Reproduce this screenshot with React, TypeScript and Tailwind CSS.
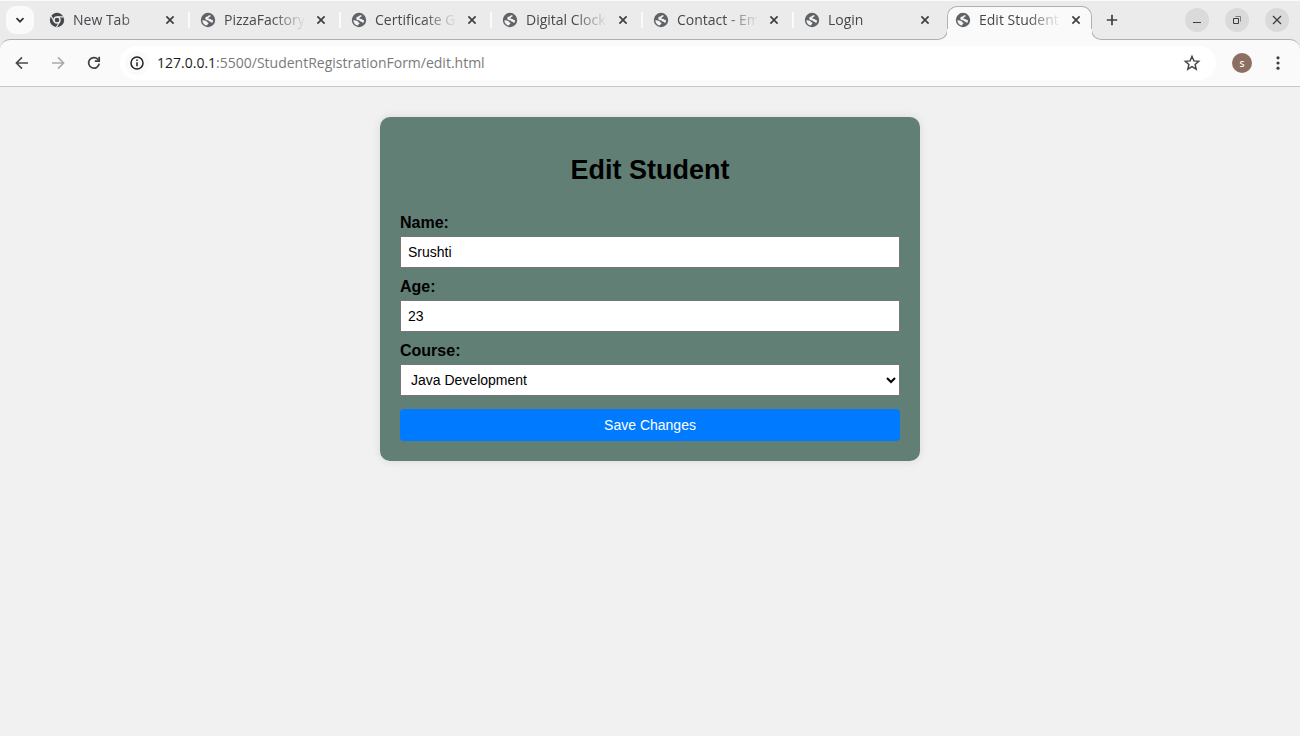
import { useState, type ReactNode } from "react";

const tabs = [
  { title: "New Tab", icon: "chrome" },
  { title: "PizzaFactory", icon: "globe" },
  { title: "Certificate G", icon: "globe" },
  { title: "Digital Clock", icon: "globe" },
  { title: "Contact - Em", icon: "globe" },
  { title: "Login", icon: "globe" },
  { title: "Edit Student", icon: "globe", active: true },
];

function GlobeIcon() {
  return (
    <svg viewBox="0 0 16 16" className="size-4 shrink-0" aria-hidden="true">
      <circle cx="8" cy="8" r="7.2" fill="#5f6368" />
      <path
        d="M8.8 3.4 C9.6 3 10.6 3.2 10.9 3.8 C10.9 4.7 9.8 4.7 9.2 5.2 C8.6 5.7 8.2 6 8.4 6.4 C8.9 6.8 10 6.5 10.6 7.1 C11.1 7.8 11.8 8.1 12.8 8 C13.2 9.2 12.8 10.2 12.1 10.9 C11.3 10.8 11.2 10 10.3 9.8 C9 9.5 8.8 8.6 7.9 8.3 C6.4 8 5.3 7.6 5.3 6.4 C5.3 5.1 6.3 5 7.2 4.6 C7.9 4.2 8 3.7 8.8 3.4 Z"
        fill="#f2f2f2"
      />
      <path
        d="M2.3 8.4 C3.7 8.3 5.2 8.4 6.2 9.1 C7.2 9.6 6.9 10.2 7.8 10.6 C8.8 11 8.6 11.8 7.8 12.2 C7.2 12.5 7.3 13.1 6.8 13.4 C4.3 13 2.4 10.8 2.3 8.4 Z"
        fill="#f2f2f2"
      />
    </svg>
  );
}

function ChromeIcon() {
  return (
    <svg viewBox="0 0 16 16" className="size-4 shrink-0" aria-hidden="true">
      <circle cx="8" cy="8" r="7.2" fill="#45484c" />
      <circle cx="8" cy="8" r="3.7" fill="#ebebeb" />
      <circle cx="8" cy="8" r="2.3" fill="#45484c" />
      <path d="M8 4.9H14.6M5.3 9.6L2 3.9M10.7 9.6L7.4 15.2" stroke="#ebebeb" strokeWidth="1.1" fill="none" />
    </svg>
  );
}

function CloseIcon() {
  return (
    <svg viewBox="0 0 16 16" className="size-4" fill="none" stroke="#3c4043" strokeWidth="1.7" aria-hidden="true">
      <path d="M4.4 4.4l7.2 7.2M11.6 4.4l-7.2 7.2" />
    </svg>
  );
}

function WindowButton({ label, children }: { label: string; children: ReactNode }) {
  return (
    <button aria-label={label} className="flex size-6 items-center justify-center rounded-full bg-[#dadada]">
      <svg viewBox="0 0 16 16" className="size-4" fill="none" stroke="#3d3d3d" aria-hidden="true">
        {children}
      </svg>
    </button>
  );
}

function TabStrip() {
  return (
    <div className="flex h-[39px] items-start border-t border-[#fafafa] pt-[5px] pr-[11px] font-['Open_Sans','Noto_Sans',sans-serif]">
      <button aria-label="Search tabs" className="ml-1.5 flex size-7 shrink-0 items-center justify-center rounded-[10px] bg-[#fafafa]">
        <svg viewBox="0 0 16 16" className="size-4" fill="none" stroke="#333" strokeWidth="1.7" aria-hidden="true">
          <path d="M4.5 6.2L8 9.7l3.5-3.5" />
        </svg>
      </button>
      <ul className="ml-[7px] flex min-w-0">
        {tabs.map((tab, i) => (
          <li key={tab.title} className="flex w-[151px] min-w-0 items-start">
            <div
              className={
                tab.active
                  ? "relative z-10 flex h-[34px] w-[145px] items-start rounded-t-[10px] border border-b-0 border-[#b0b0b0] bg-[#fafafa] px-[7px] pt-[5px]"
                  : "flex h-[34px] w-[145px] items-start px-2 pt-1.5"
              }
            >
              {tab.active && (
                <>
                  <span className="absolute bottom-0 -left-[11px] size-[11px] bg-[#fafafa]">
                    <span className="block size-[11px] rounded-br-[10px] border-r border-b border-[#b0b0b0] bg-[#ebebeb]" />
                  </span>
                  <span className="absolute -right-[11px] bottom-0 size-[11px] bg-[#fafafa]">
                    <span className="block size-[11px] rounded-bl-[10px] border-b border-l border-[#b0b0b0] bg-[#ebebeb]" />
                  </span>
                  <span className="absolute bottom-0 -left-px h-[11px] w-px bg-[#fafafa]" />
                  <span className="absolute -right-px bottom-0 h-[11px] w-px bg-[#fafafa]" />
                </>
              )}
              <a href="#" className="flex h-4 min-w-0 flex-1 items-center gap-2">
                {tab.icon === "chrome" ? <ChromeIcon /> : <GlobeIcon />}
                <span className="min-w-0 flex-1 overflow-hidden [mask-image:linear-gradient(to_right,black_48px,transparent_82px)] text-[14px] leading-5 whitespace-nowrap text-[#45484c]">
                  {tab.title}
                </span>
              </a>
              <button aria-label={"Close " + tab.title} className="ml-[9px] size-4 shrink-0">
                <CloseIcon />
              </button>
            </div>
            {i < tabs.length - 2 && <span className="mt-1.5 ml-0.5 h-4 w-0.5 bg-[#fafafa]" />}
          </li>
        ))}
      </ul>
      <button aria-label="New tab" className="mt-1.5 ml-1.5 size-4 shrink-0">
        <svg viewBox="0 0 16 16" className="size-4" fill="none" stroke="#3c4043" strokeWidth="1.7" aria-hidden="true">
          <path d="M8 2.8v10.4M2.8 8h10.4" />
        </svg>
      </button>
      <div className="mt-0.5 ml-auto flex shrink-0 gap-4">
        <WindowButton label="Minimize">
          <path d="M4 10.5h8" />
        </WindowButton>
        <WindowButton label="Restore">
          <path d="M4.5 6.5h5v5h-5z" />
          <path d="M6.5 4.5h5v5" strokeOpacity=".6" />
        </WindowButton>
        <WindowButton label="Close window">
          <path d="M4 4l8 8M12 4l-8 8" strokeWidth="1.3" />
        </WindowButton>
      </div>
    </div>
  );
}

function Toolbar() {
  return (
    <div className="flex h-12 items-center rounded-t-[10px] border-t border-b border-t-[#b0b0b0] border-b-[#c8c8c8] bg-[#fafafa] pr-3.5 pl-3 font-['Open_Sans','Noto_Sans',sans-serif]">
      <div className="flex gap-4">
        <button aria-label="Back">
          <svg viewBox="0 0 20 20" className="size-5" fill="none" stroke="#45484c" strokeWidth="1.6" aria-hidden="true">
            <path d="M16 10H4.8M10 4.4L4.4 10l5.6 5.6" />
          </svg>
        </button>
        <button aria-label="Forward" disabled>
          <svg viewBox="0 0 20 20" className="size-5" fill="none" stroke="#ababab" strokeWidth="1.6" aria-hidden="true">
            <path d="M4 10h11.2M10 4.4l5.6 5.6-5.6 5.6" />
          </svg>
        </button>
        <button aria-label="Reload">
          <svg viewBox="0 0 20 20" className="size-5" fill="none" stroke="#3c4043" strokeWidth="1.7" aria-hidden="true">
            <path d="M15.2 10.6A5.3 5.3 0 1 1 13.9 6.3L15 7.6" />
            <path d="M15.2 3.8v4.4h-4.4" />
          </svg>
        </button>
      </div>
      <div className="ml-4 flex h-[34px] min-w-0 flex-1 items-center rounded-full bg-white pr-3.5 pl-[5px]">
        <button aria-label="View site information" className="flex size-6 shrink-0 items-center justify-center rounded-full bg-[#fafafa]">
          <svg viewBox="0 0 16 16" className="size-4" fill="none" stroke="#202124" strokeWidth="1.5" aria-hidden="true">
            <circle cx="8" cy="8" r="6" />
            <path d="M8 7.2v4M8 4.5v1.5" />
          </svg>
        </button>
        <a href="#" className="ml-2 min-w-0 flex-1 truncate text-[14px] leading-5 text-[#7a7a7a]">
          <span className="text-[#1c1c1c]">127.0.0.1</span>:5500/StudentRegistrationForm/edit.html
        </a>
        <button aria-label="Bookmark this tab">
          <svg viewBox="0 0 20 20" className="size-5" fill="none" stroke="#45484c" strokeWidth="1.5" aria-hidden="true">
            <path d="M10 3.5l1.9 4.4 4.8.4-3.6 3.1 1.1 4.7-4.2-2.5-4.2 2.5 1.1-4.7-3.6-3.1 4.8-.4z" />
          </svg>
        </button>
      </div>
      <button aria-label="Profile" className="ml-4 flex size-5 items-center justify-center rounded-full bg-[#8d6e63] text-[9px] leading-none font-semibold text-white">
        S
      </button>
      <button aria-label="Menu" className="ml-[18px]">
        <svg viewBox="0 0 16 16" className="size-4" fill="#3c4043" aria-hidden="true">
          <circle cx="8" cy="2.8" r="1.6" />
          <circle cx="8" cy="8" r="1.6" />
          <circle cx="8" cy="13.2" r="1.6" />
        </svg>
      </button>
    </div>
  );
}

function EditForm() {
  const [name, setName] = useState("Srushti");
  const [age, setAge] = useState("23");
  return (
    <form
      onSubmit={(e) => e.preventDefault()}
      className="mx-auto flex w-full max-w-[540px] flex-col rounded-[10px] bg-[#627f75] p-5 text-black shadow-[0_0_10px_rgba(0,0,0,0.1)]"
    >
      <h2 className="mt-[17px] mb-[27px] text-center text-[27px] leading-8 font-bold">Edit Student</h2>
      <label htmlFor="name" className="mb-[3px] text-base leading-5 font-bold">
        Name:
      </label>
      <input
        id="name"
        value={name}
        onChange={(e) => setName(e.target.value)}
        className="mb-[9px] h-8 border border-[#767676] bg-white px-[7px] text-[14px]"
      />
      <label htmlFor="age" className="mb-[3px] text-base leading-5 font-bold">
        Age:
      </label>
      <input
        id="age"
        value={age}
        inputMode="numeric"
        onChange={(e) => setAge(e.target.value)}
        className="mb-[9px] h-8 border border-[#767676] bg-white px-[7px] text-[14px]"
      />
      <label htmlFor="course" className="mb-[3px] text-base leading-5 font-bold">
        Course:
      </label>
      <select id="course" className="mb-[13px] h-8 rounded-none border border-[#767676] bg-white px-1.5 text-[14px]">
        <option>Java Development</option>
      </select>
      <button type="submit" className="h-8 rounded-[4px] bg-[#007bff] text-[14px] text-white">
        Save Changes
      </button>
    </form>
  );
}

export default function App() {
  return (
    <div className="min-h-screen bg-[#f1f1f1] font-['Liberation_Sans',Arial,sans-serif]">
      <header className="bg-[#ebebeb]">
        <TabStrip />
        <Toolbar />
      </header>
      <main className="px-5 pt-[30px]">
        <EditForm />
      </main>
    </div>
  );
}
